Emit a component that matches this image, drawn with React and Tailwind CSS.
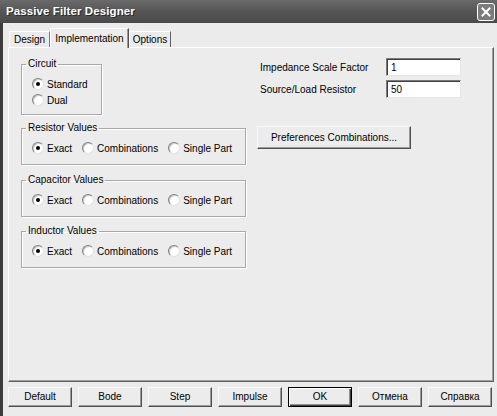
import React, { useState } from "react";

const Radio = ({ checked, label, onClick }) => (
  <label className="flex items-center gap-[3px] cursor-default" onClick={onClick}>
    <span className="w-[12px] h-[12px] rounded-full bg-white border border-t-[#808080] border-l-[#808080] border-r-[#e2e2e2] border-b-[#e2e2e2] flex items-center justify-center shadow-[inset_1px_1px_0_#c8c8c8]">
      {checked && <span className="w-[4px] h-[4px] rounded-full bg-black" />}
    </span>
    <span>{label}</span>
  </label>
);

const Group = ({ title, className, children }) => (
  <fieldset
    className={`border border-[#a8a8a8] shadow-[1px_1px_0_#fff,inset_1px_1px_0_#fff] pl-[10px] pt-[6px] ${className}`}
  >
    <legend className="-ml-[6px] px-[2px] leading-[12px]">{title}</legend>
    {children}
  </fieldset>
);

const ValueGroup = ({ title, className }) => {
  const [value, setValue] = useState("exact");
  return (
    <Group title={title} className={`h-[43px] ${className}`}>
      <div className="flex items-center gap-[10px] h-[14px] mt-[1px]">
        <Radio checked={value === "exact"} label="Exact" onClick={() => setValue("exact")} />
        <Radio checked={value === "comb"} label="Combinations" onClick={() => setValue("comb")} />
        <Radio checked={value === "single"} label="Single Part" onClick={() => setValue("single")} />
      </div>
    </Group>
  );
};

const Button = ({ children, isDefault, className = "" }) => (
  <button
    className={`bg-[#ececec] text-black leading-none ${
      isDefault
        ? "border border-black shadow-[inset_1px_1px_0_#fff,inset_-1px_-1px_0_#404040,inset_-2px_-2px_0_#909090]"
        : "border border-t-[#f8f8f8] border-l-[#f8f8f8] border-r-[#505050] border-b-[#505050] shadow-[inset_-1px_-1px_0_#9a9a9a]"
    } ${className}`}
  >
    {children}
  </button>
);

export default function App() {
  const [circuit, setCircuit] = useState("standard");
  const [scale, setScale] = useState("1");
  const [resistor, setResistor] = useState("50");

  return (
    <div className="w-[497px] h-[416px] flex flex-col bg-[#ebebeb] text-[10px] text-black font-['Liberation_Sans',Arial,sans-serif]">
      {/* title bar */}
      <div className="h-[23px] flex items-center justify-between bg-gradient-to-b from-[#6a6a6a] via-[#555555] to-[#4a4a4a] pl-[6px] pr-[2px]">
        <span className="text-white font-bold text-[11.5px] tracking-[0.1px] [text-shadow:1px_1px_0_#2a2a2a]">
          Passive Filter Designer
        </span>
        <span className="w-[18px] h-[18px] rounded-[3px] border border-white bg-[#7c7c7c] flex items-center justify-center">
          <svg width="10" height="10" viewBox="0 0 10 10">
            <path d="M1.5 1.5 L8.5 8.5 M8.5 1.5 L1.5 8.5" stroke="#fff" strokeWidth="2" strokeLinecap="square" />
          </svg>
        </span>
      </div>

      <div className="flex-1 flex flex-col border-l-[3px] border-[#3c3c3c] pl-[5px] pt-[5px]">
        {/* tabs */}
        <div className="flex items-end h-[19px] pl-[1px]">
          <div className="w-[41px] h-[16px] flex items-center justify-center border border-b-0 border-t-white border-l-white border-r-[#7a7a7a]">
            Design
          </div>
          <div className="relative z-10 -mb-px w-[79px] h-[20px] flex items-center justify-center bg-[#ececec] border border-b-0 border-t-white border-l-white border-r-[#505050] shadow-[inset_-1px_0_0_#9a9a9a]">
            Implementation
          </div>
          <div className="w-[42px] h-[16px] flex items-center justify-center border border-b-0 border-t-white border-l-white border-r-[#606060]">
            Options
          </div>
        </div>

        {/* panel */}
        <div className="w-[486px] h-[335px] bg-[#ececec] border border-t-white border-l-white border-r-[#606060] border-b-[#606060] shadow-[inset_-1px_-1px_0_#a0a0a0] flex pl-[12px] pt-[10px]">
          <div className="w-[225px] flex flex-col">
            <Group title="Circuit" className="w-[81px] h-[57px]">
              <div className="flex flex-col">
                <div className="h-[16px] flex items-center">
                  <Radio checked={circuit === "standard"} label="Standard" onClick={() => setCircuit("standard")} />
                </div>
                <div className="h-[16px] flex items-center">
                  <Radio checked={circuit === "dual"} label="Dual" onClick={() => setCircuit("dual")} />
                </div>
              </div>
            </Group>
            <ValueGroup title="Resistor Values" className="mt-[7px]" />
            <ValueGroup title="Capacitor Values" className="mt-[9px]" />
            <ValueGroup title="Inductor Values" className="mt-[8px]" />
          </div>

          <div className="ml-[11px] flex flex-col">
            <div className="flex items-center h-[18px]">
              <span className="w-[129px] pl-[3px]">Impedance Scale Factor</span>
              <input
                value={scale}
                onChange={(e) => setScale(e.target.value)}
                className="w-[75px] h-[18px] bg-white pl-[4px] outline-none border border-t-[#7a7a7a] border-l-[#7a7a7a] border-r-[#e6e6e6] border-b-[#e6e6e6] shadow-[inset_1px_1px_0_#404040]"
              />
            </div>
            <div className="flex items-center h-[18px] mt-[4px]">
              <span className="w-[129px] pl-[3px]">Source/Load Resistor</span>
              <input
                value={resistor}
                onChange={(e) => setResistor(e.target.value)}
                className="w-[75px] h-[18px] bg-white pl-[4px] outline-none border border-t-[#7a7a7a] border-l-[#7a7a7a] border-r-[#e6e6e6] border-b-[#e6e6e6] shadow-[inset_1px_1px_0_#404040]"
              />
            </div>
            <Button className="mt-[28px] w-[154px] h-[23px]">Preferences Combinations...</Button>
          </div>
        </div>

        {/* bottom buttons */}
        <div className="flex gap-[6px] mt-[5px]">
          <Button className="w-[64px] h-[20px]">Default</Button>
          <Button className="w-[64px] h-[20px]">Bode</Button>
          <Button className="w-[64px] h-[20px]">Step</Button>
          <Button className="w-[64px] h-[20px]">Impulse</Button>
          <Button isDefault className="w-[64px] h-[20px]">OK</Button>
          <Button className="w-[64px] h-[20px]">Отмена</Button>
          <Button className="w-[64px] h-[20px]">Справка</Button>
        </div>
      </div>
    </div>
  );
}
